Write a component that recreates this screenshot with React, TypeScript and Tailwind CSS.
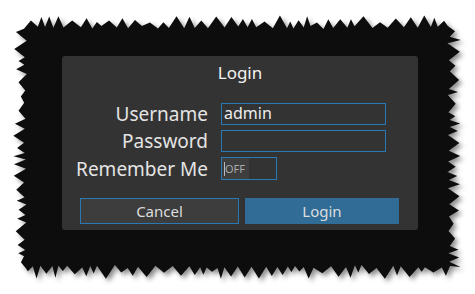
import React from "react";

// jagged "torn paper" outline for the screenshot frame
function rnd(seed: number) {
  let s = seed;
  return () => {
    s = (s * 9301 + 49297) % 233280;
    return s / 233280;
  };
}

function tornPath() {
  const r = rnd(11);
  const pts: [number, number][] = [];
  const L = 24, T = 26, R = 450, B = 268;
  const step = () => 6 + r() * 12;
  const tip = () => 3 + r() * 8;
  // top, left->right
  for (let x = L; x < R; ) {
    const s = step();
    pts.push([x, T + r() * 3]);
    pts.push([x + s / 2, T - tip()]);
    x += s;
  }
  // right, top->bottom
  for (let y = T; y < B; ) {
    const s = step();
    pts.push([R - r() * 3, y]);
    pts.push([R + tip(), y + s / 2]);
    y += s;
  }
  // bottom, right->left
  for (let x = R; x > L; ) {
    const s = step();
    pts.push([x, B - r() * 3]);
    pts.push([x - s / 2, B + tip()]);
    x -= s;
  }
  // left, bottom->top
  for (let y = B; y > T; ) {
    const s = step();
    pts.push([L + r() * 3, y]);
    pts.push([L - tip(), y - s / 2]);
    y -= s;
  }
  return pts.map((p) => p.join(",")).join(" ");
}

export default function App() {
  const font = { fontFamily: "'Noto Sans', 'Open Sans', sans-serif" };
  return (
    <div className="relative w-[475px] h-[294px] bg-white overflow-hidden" style={font}>
      <svg className="absolute inset-0" width="475" height="294">
        <defs>
          <filter id="sh" x="-10%" y="-10%" width="120%" height="120%">
            <feDropShadow dx="3" dy="3" stdDeviation="2.5" floodColor="#000" floodOpacity="0.45" />
          </filter>
        </defs>
        <polygon points={tornPath()} fill="#0a0a0a" filter="url(#sh)" />
      </svg>

      <div className="relative ml-[62px] mt-[56px] w-[356px] h-[174px] rounded-[3px] bg-[#333333] flex flex-col">
        <div className="h-[38px] pt-[5px] text-center text-[17px] text-[#f2f2f2] leading-[24px]">Login</div>

        <div className="mt-[9px] grid grid-cols-[146px_165px] gap-x-[13px] gap-y-[5px] items-center">
          <div className="text-right text-[19px] leading-[22px] text-[#e4e4e4]">Username</div>
          <div className="h-[22px] border border-[#2a78b4] text-[16px] leading-[19px] text-[#eeeeee] pl-[2px]">admin</div>

          <div className="text-right text-[19px] leading-[22px] text-[#e4e4e4]">Password</div>
          <div className="h-[22px] border border-[#2a78b4]"></div>

          <div className="text-right text-[19px] leading-[22px] text-[#e4e4e4]">Remember Me</div>
          <div className="h-[23px] w-[56px] border border-[#2a78b4] flex">
            <div className="w-[27px] h-full bg-[#3e3e3e] flex items-center pl-[2px]">
              <span className="w-px h-[14px] bg-[#bbbbbb]"></span>
              <span className="text-[11px] text-[#aaaaaa] leading-none">OFF</span>
            </div>
          </div>
        </div>

        <div className="mt-[18px] ml-[18px] flex gap-[6px]">
          <button className="w-[159px] h-[26px] border border-[#2a78b4] bg-[#3d3d3d] text-[15px] leading-[24px] text-[#dddddd]">Cancel</button>
          <button className="w-[154px] h-[26px] bg-[#316c97] text-[15px] leading-[26px] text-[#dddddd]">Login</button>
        </div>
      </div>
    </div>
  );
}
